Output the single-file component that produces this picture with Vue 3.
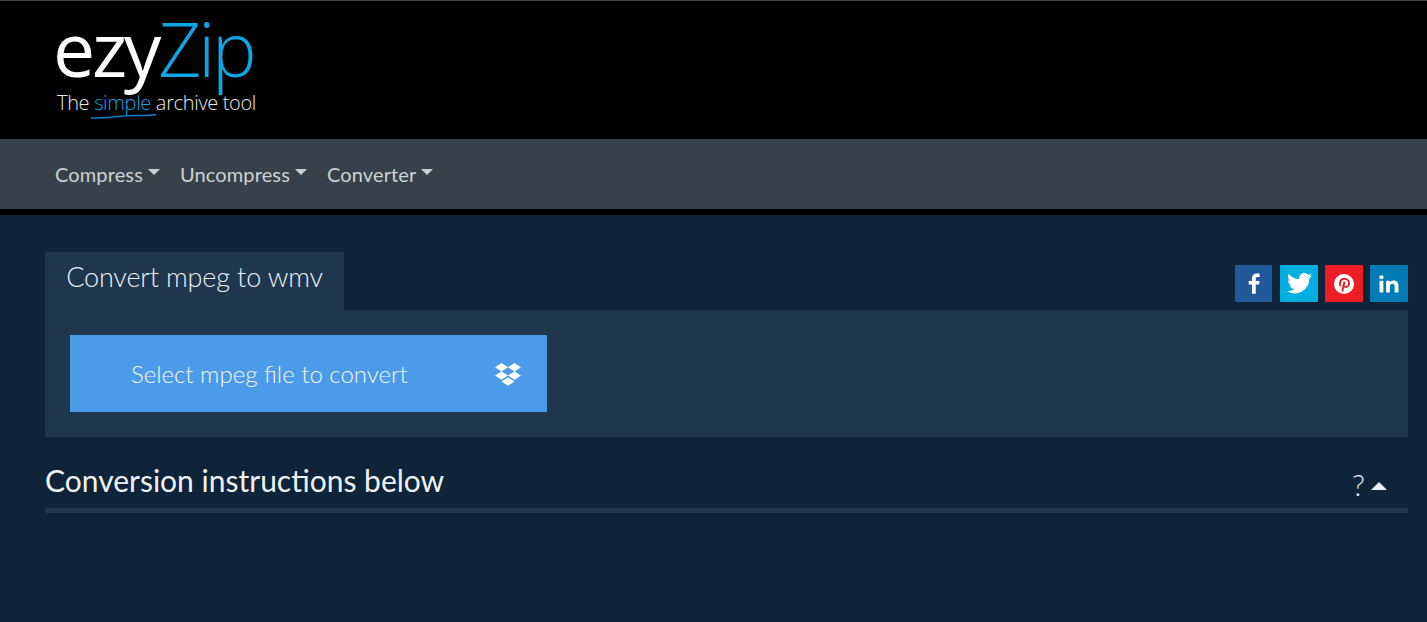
<template>
  <div class="page">
    <header class="brand">
      <div class="logo">
        <div class="logo-name"><span class="ezy">ezy</span><span class="zip">Zip</span></div>
        <div class="logo-tag">The <span class="simple">simple</span> archive tool</div>
        <svg class="squiggle" width="68" height="6" viewBox="0 0 68 6">
          <path d="M1 5C12 5.500 24 3.500 38 2.800C48 2.300 58 2.800 66 1.500" fill="none" stroke="#0e7fd0" stroke-width="1.500" />
        </svg>
      </div>
    </header>

    <nav class="menu">
      <a v-for="item in menu" :key="item" class="menu-item">{{ item }}<span class="caret"></span></a>
    </nav>

    <main class="content">
      <div class="tab-row">
        <div class="tab">Convert mpeg to wmv</div>
        <div class="social">
          <a class="share fb">
            <svg width="12" height="21" viewBox="0 0 13 22"><path d="M8.400 22V12.200H12L12.500 8.300H8.400V5.900C8.400 4.700 8.800 4 10.400 4H12.600V.4C12 .3 10.900.2 9.500.2C6.400.2 4.300 2 4.300 5.500V8.300H.8V12.200H4.300V22Z" fill="#fff" /></svg>
          </a>
          <a class="share tw">
            <svg width="25" height="21" viewBox="0 0 24 20"><path d="M24 2.400C23.100 2.800 22.200 3 21.200 3.200C22.200 2.600 23 1.600 23.400.4C22.400 1 21.400 1.400 20.200 1.600C19.300.600 18 0 16.600 0C13.900 0 11.700 2.200 11.700 4.900C11.700 5.300 11.700 5.700 11.800 6C7.700 5.800 4.100 3.900 1.700.9C1.300 1.600 1 2.500 1 3.400C1 5.100 1.900 6.600 3.200 7.500C2.400 7.500 1.600 7.300 1 6.900V7C1 9.400 2.700 11.400 4.900 11.800C4.500 11.900 4.100 12 3.600 12C3.300 12 3 12 2.700 11.900C3.300 13.900 5.100 15.300 7.300 15.300C5.600 16.600 3.500 17.400 1.200 17.400C.8 17.400.4 17.400 0 17.300C2.200 18.700 4.800 19.500 7.500 19.500C16.600 19.500 21.500 12 21.500 5.500V4.900C22.500 4.200 23.300 3.300 24 2.400Z" fill="#fff" /></svg>
          </a>
          <a class="share pi">
            <svg width="22" height="22" viewBox="0 0 22 22">
              <circle cx="11" cy="11" r="10" fill="#fff" />
              <path d="M7.700 13.200C5.800 10.500 7.200 5.800 11.500 5.800C15.500 5.800 16.800 9.200 15.600 12C14.700 14.200 12.300 14.500 11.300 13" fill="none" stroke="#ee1c25" stroke-width="1.900" />
              <path d="M11.500 8.500L9.300 18.500" fill="none" stroke="#ee1c25" stroke-width="1.900" />
            </svg>
          </a>
          <a class="share li">
            <svg width="20" height="18" viewBox="0 0 22 20"><path d="M.5 6.500H4.700V19.500H.5ZM2.600.3C4 .3 5 1.300 5 2.500C5 3.700 4 4.700 2.600 4.700C1.200 4.700.2 3.700.2 2.500C.2 1.300 1.200.3 2.600.3ZM7.800 6.500H11.800V8.300C12.500 7.200 14 6.200 16 6.200C20 6.200 21.500 8.600 21.500 12.200V19.500H17.300V13C17.300 11.200 16.800 9.800 15 9.800C13.100 9.800 12 11.100 12 13V19.500H7.800Z" fill="#fff" /></svg>
          </a>
        </div>
      </div>

      <section class="panel">
        <div class="select-btn">
          <span>Select mpeg file to convert</span>
          <svg class="dropbox" width="28" height="24" viewBox="0 0 28 24">
            <path d="M7.500 1L14 5.200L7.500 9.400L1 5.200ZM20.500 1L27 5.200L20.500 9.400L14 5.200ZM1 13.600L7.500 9.400L14 13.600L7.500 17.800ZM20.500 9.400L27 13.600L20.500 17.800L14 13.600ZM14 15.400L20.500 19.500L14 23.700L7.500 19.500Z" fill="#fff" />
          </svg>
        </div>
      </section>

      <div class="instructions">
        <h2>Conversion instructions below</h2>
        <div class="toggle">?<span class="caret-up"></span></div>
      </div>
    </main>
  </div>
</template>

<script setup>
const menu = ['Compress', 'Uncompress', 'Converter']
</script>

<style>
html,
body {
  margin: 0;
  background: #0f2339;
}
</style>

<style scoped>
.page {
  min-height: 622px;
  background: #0f2339;
  font-family: Lato, "Open Sans", sans-serif;
  display: flex;
  flex-direction: column;
}

.brand {
  height: 138px;
  background: #000;
  border-top: 1px solid #444;
  padding-left: 53px;
}

.logo {
  position: relative;
  width: 210px;
}

.logo-name {
  font-family: "Open Sans", sans-serif;
  font-weight: 300;
  font-size: 75px;
  line-height: 88px;
  height: 85px;
  padding-top: 3px;
  letter-spacing: -3.200px;
  white-space: nowrap;
}

.ezy {
  color: #fff;
  font-weight: 400;
}

.zip {
  color: #0ea5e4;
}

.logo-tag {
  font-family: "Open Sans", sans-serif;
  font-weight: 300;
  font-size: 20px;
  line-height: 26px;
  color: #e8e8e8;
  margin-left: 4px;
  margin-top: 1px;
  white-space: nowrap;
  letter-spacing: -0.340px;
}

.simple {
  color: #0ea5e4;
}

.squiggle {
  position: absolute;
  left: 37px;
  top: 112px;
}

.menu {
  height: 70px;
  background: #37414b;
  border-bottom: 6px solid #000;
  display: flex;
  align-items: center;
  padding-left: 55px;
  gap: 20px;
}

.menu-item {
  color: #ced1d4;
  font-size: 20px;
  letter-spacing: 0.130px;
  display: flex;
  align-items: center;
}

.caret {
  width: 0;
  height: 0;
  margin-left: 5px;
  margin-top: -5px;
  border-top: 6px solid #ced1d4;
  border-left: 6px solid transparent;
  border-right: 6px solid transparent;
}

.content {
  padding: 37px 19px 0 45px;
}

.tab-row {
  display: flex;
  justify-content: space-between;
  align-items: flex-end;
  height: 58px;
}

.tab {
  width: 299px;
  height: 58px;
  box-sizing: border-box;
  background: #20364d;
  color: #eef2f5;
  font-size: 27px;
  font-weight: 300;
  letter-spacing: -0.150px;
  line-height: 50px;
  text-align: center;
}

.social {
  display: flex;
  gap: 7px;
  margin-bottom: 8px;
}

.share {
  width: 38px;
  height: 37px;
  display: flex;
  align-items: center;
  justify-content: center;
  border-radius: 1px;
}

.fb {
  width: 37px;
  margin-right: 1px;
  background: #205a9a;
}

.tw {
  background: #00aee0;
}

.pi {
  background: #ee1c25;
}

.li {
  background: #007bb6;
}

.panel {
  background: #20364d;
  padding: 25px;
  height: 127px;
  box-sizing: border-box;
}

.select-btn {
  width: 477px;
  height: 77px;
  box-sizing: border-box;
  background: #4b9be8;
  color: #f2f7fc;
  font-size: 24px;
  font-weight: 300;
  display: flex;
  align-items: center;
  justify-content: space-between;
  padding: 0 25px 0 61px;
}

.instructions {
  display: flex;
  justify-content: space-between;
  align-items: center;
  height: 76px;
  padding-top: 14px;
  box-sizing: border-box;
  border-bottom: 5px solid #20364d;
}

.instructions h2 {
  margin: 0;
  color: #eef2f5;
  font-size: 30px;
  font-weight: 400;
}

.toggle {
  color: #eef2f5;
  font-size: 30px;
  font-weight: 300;
  display: flex;
  align-items: center;
  margin-right: 21px;
  padding-top: 9px;
}

.caret-up {
  width: 0;
  height: 0;
  margin-left: 6px;
  margin-top: 3px;
  border-bottom: 8px solid #eef2f5;
  border-left: 8px solid transparent;
  border-right: 8px solid transparent;
}
</style>
